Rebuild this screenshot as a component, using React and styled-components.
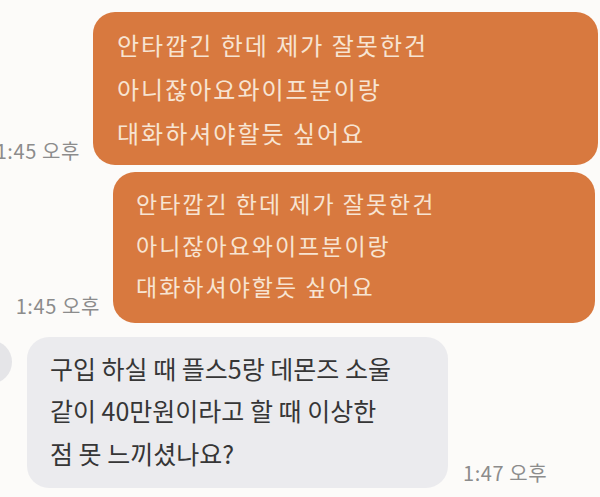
import React from 'react'
import styled, {createGlobalStyle} from 'styled-components'

const GlobalStyle = createGlobalStyle`
body{
  margin: 0;
  background: #fcfbf9;
  font-family: "Noto Sans CJK KR", "Noto Sans", sans-serif;
  overflow: hidden;
}
`

const Page = styled.div`
width: 600px;
height: 497px;
display: flex;
flex-direction: column;
padding-top: 12px;
box-sizing: border-box;
overflow: hidden;
`

const Row = styled.div`
display: flex;
align-items: flex-end;
justify-content: ${p => p.$mine ? 'flex-end' : 'flex-start'};
gap: ${p => p.$gap}px;
padding-right: ${p => p.$right || 0}px;
margin-bottom: ${p => p.$below || 0}px;
`

const Time = styled.span`
flex-shrink: 0;
white-space: nowrap;
font-size: 20px;
letter-spacing: 0.6px;
color: #8c8c8c;
margin-bottom: ${p => p.$lift || 0}px;
`

const Bubble = styled.div`
flex-shrink: 0;
box-sizing: border-box;
width: ${p => p.$width}px;
border-radius: 22px;
white-space: nowrap;
background: ${p => p.$mine ? '#d8793f' : '#ebebee'};
color: ${p => p.$mine ? '#f7e4d2' : '#363636'};
font-size: ${p => p.$size}px;
letter-spacing: ${p => p.$mine ? 2 : 0}px;
line-height: ${p => p.$line}px;
padding: ${p => p.$pad};
`

const Avatar = styled.div`
flex-shrink: 0;
align-self: flex-start;
width: 44px;
height: 44px;
border-radius: 50%;
background: #e5e5e8;
margin-left: -32px;
margin-top: 3px;
`

function App() {
  return (
    <Page>
      <GlobalStyle />
      <Row $mine $gap={13} $right={2} $below={7}>
        <Time>1:45 오후</Time>
        <Bubble $mine $width={505} $size={24} $line={44} $pad="11px 0 10px 24px">
          안타깝긴 한데 제가 잘못한건<br />
          아니잖아요와이프분이랑<br />
          대화하셔야할듯 싶어요
        </Bubble>
      </Row>
      <Row $mine $gap={13} $right={5} $below={14}>
        <Time $lift={3}>1:45 오후</Time>
        <Bubble $mine $width={482} $size={23} $line={41.5} $pad="11px 0 15px 23px">
          안타깝긴 한데 제가 잘못한건<br />
          아니잖아요와이프분이랑<br />
          대화하셔야할듯 싶어요
        </Bubble>
      </Row>
      <Row $gap={15}>
        <Avatar />
        <Bubble $width={421} $size={25} $line={42.5} $pad="10px 0 14px 23px">
          구입 하실 때 플스5랑 데몬즈 소울<br />
          같이 40만원이라고 할 때 이상한<br />
          점 못 느끼셨나요?
        </Bubble>
        <Time $lift={1}>1:47 오후</Time>
      </Row>
    </Page>
  )
}

export default App
